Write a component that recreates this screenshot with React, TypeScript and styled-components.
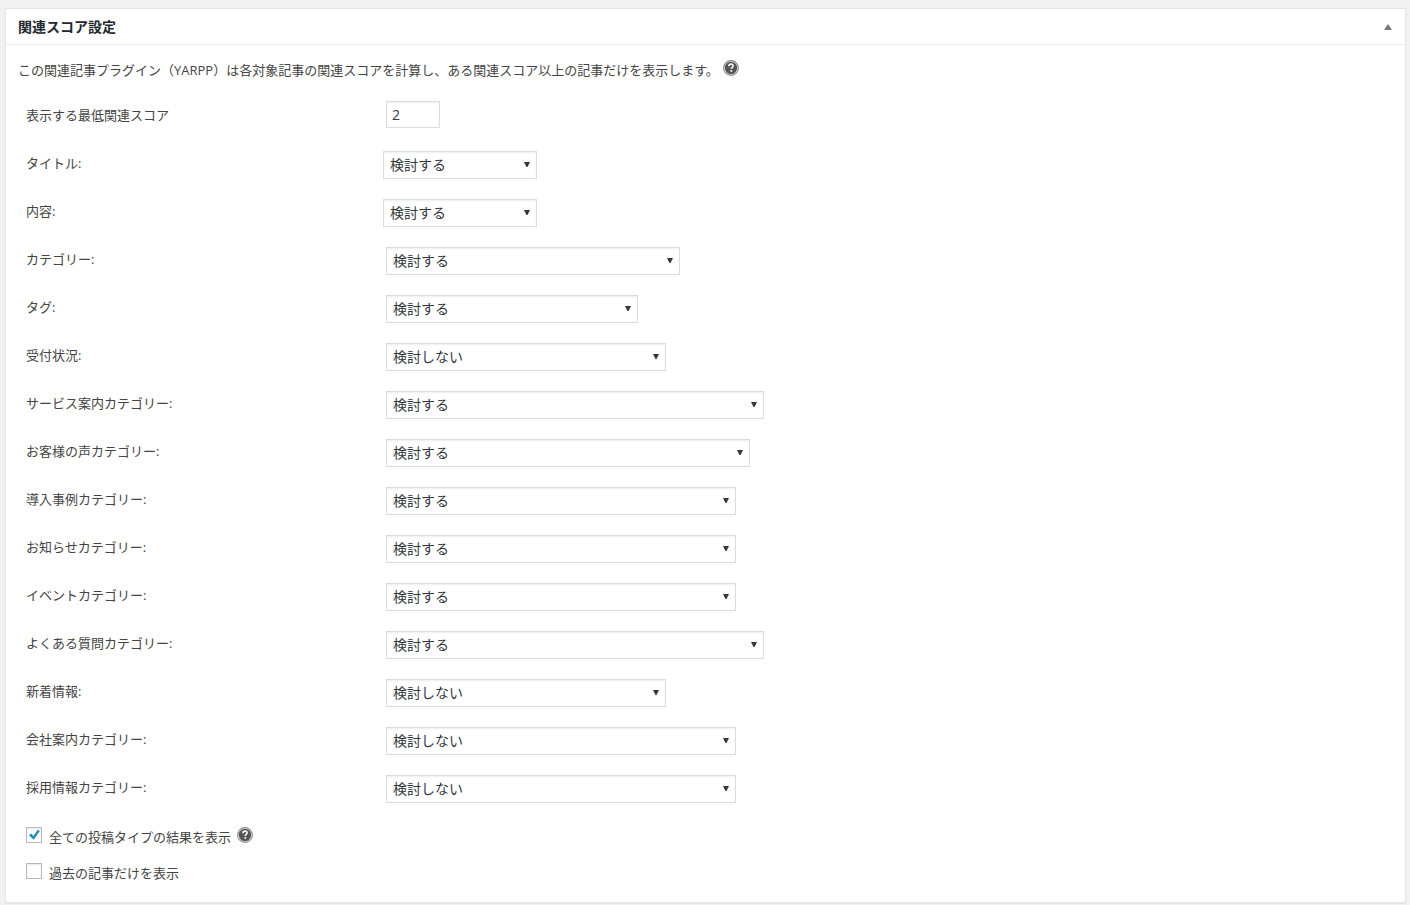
import React, { useState } from 'react';
import styled, { createGlobalStyle } from 'styled-components';

const GlobalStyle = createGlobalStyle`
  *, *::before, *::after { box-sizing: border-box; }
  body {
    margin: 0;
    background: #f1f1f1;
    color: #444;
    font-family: "Open Sans", "Noto Sans CJK JP", sans-serif;
    font-size: 13px;
  }
`;

const Page = styled.main`
  padding: 8px 4px 2px 5px;
`;

const Panel = styled.section`
  background: #fff;
  border: 1px solid #e5e5e5;
  box-shadow: 0 1px 1px rgba(0, 0, 0, 0.04);
`;

const PanelHeader = styled.header`
  display: flex;
  align-items: center;
  justify-content: space-between;
  height: 36px;
  padding: 0 12px;
  border-bottom: 1px solid #eee;
`;

const PanelTitle = styled.h2`
  margin: 0;
  color: #23282d;
  font-size: 14px;
  font-weight: 700;
  line-height: 20px;
`;

const ToggleButton = styled.button`
  display: flex;
  align-items: center;
  justify-content: center;
  width: 10px;
  height: 20px;
  padding: 0;
  border: 0;
  background: none;
  color: #72777c;
  cursor: pointer;
`;

const PanelBody = styled.form`
  padding: 15px 12px 11px;
`;

const Intro = styled.p`
  display: flex;
  align-items: flex-start;
  gap: 4px;
  margin: 0 0 11px;
  line-height: 20px;
`;

const Fields = styled.div`
  padding: 0 8px;
`;

const Row = styled.div`
  display: flex;
  align-items: flex-start;
  height: 48px;
  padding-top: 10px;
`;

const ScoreRow = styled(Row)`
  height: 50px;
`;

const Label = styled.label<{ $narrow?: boolean }>`
  flex: none;
  width: ${(p) => (p.$narrow ? 357 : 360)}px;
  line-height: 24px;
`;

const ScoreLabel = styled(Label)`
  line-height: 28px;
`;

const ScoreInput = styled.input`
  width: 54px;
  height: 27px;
  padding: 0 5px;
  border: 1px solid #ddd;
  background: #fff;
  box-shadow: inset 0 1px 2px rgba(0, 0, 0, 0.07);
  color: #32373c;
  font-family: inherit;
  font-size: 14px;
`;

const SelectWrap = styled.div<{ $width: number }>`
  position: relative;
  width: ${(p) => p.$width}px;
`;

const Select = styled.select`
  display: block;
  width: 100%;
  height: 28px;
  padding: 0 24px 2px 6px;
  appearance: none;
  border: 1px solid #ddd;
  border-radius: 0;
  background: #fff;
  box-shadow: inset 0 1px 2px rgba(0, 0, 0, 0.07);
  color: #32373c;
  font-family: inherit;
  font-size: 14px;
`;

const SelectArrow = styled.svg`
  position: absolute;
  top: 11px;
  right: 7px;
  pointer-events: none;
`;

const CheckRow = styled.div`
  display: flex;
  align-items: flex-start;
  gap: 6px;
  height: 36px;
  padding-top: 8px;
  line-height: 20px;
`;

const Checks = styled.div`
  padding: 6px 8px 0;
`;

const CheckLabel = styled.label`
  display: flex;
  align-items: flex-start;
  gap: 7px;
`;

const CheckWrap = styled.span`
  position: relative;
  width: 16px;
  height: 16px;
`;

const Checkbox = styled.input`
  display: block;
  width: 16px;
  height: 16px;
  margin: 0;
  appearance: none;
  border: 1px solid #b4b9be;
  background: #fff;
  box-shadow: inset 0 1px 2px rgba(0, 0, 0, 0.1);
`;

const CheckMark = styled.svg`
  position: absolute;
  top: 0;
  left: 0;
  pointer-events: none;
`;

const HelpButton = styled.button`
  display: block;
  flex: none;
  width: 16px;
  height: 16px;
  padding: 0;
  border: 0;
  background: none;
  cursor: help;
`;

const Help = () => (
  <HelpButton type="button" aria-label="ヘルプ">
    <svg width="16" height="16" viewBox="0 0 16 16" aria-hidden="true">
      <circle cx="8" cy="8" r="7.4" fill="#f4f4f4" stroke="#8a8a8a" strokeWidth="1.1" />
      <circle cx="8" cy="8" r="6.2" fill="#555" />
      <path
        d="M5.9 6.2c0-1.4.9-2 2.1-2s2.1.6 2.1 1.8c0 1.4-1.8 1.4-1.8 2.9"
        fill="none"
        stroke="#f0f0f0"
        strokeWidth="1.7"
      />
      <rect x="7.4" y="10" width="1.8" height="1.8" fill="#f0f0f0" />
    </svg>
  </HelpButton>
);

const OPTIONS = ['検討しない', '検討する'];

const FIELDS = [
  { id: 'title', label: 'タイトル:', value: '検討する', width: 154, narrow: true },
  { id: 'body', label: '内容:', value: '検討する', width: 154, narrow: true },
  { id: 'category', label: 'カテゴリー:', value: '検討する', width: 294 },
  { id: 'tag', label: 'タグ:', value: '検討する', width: 252 },
  { id: 'status', label: '受付状況:', value: '検討しない', width: 280 },
  { id: 'service', label: 'サービス案内カテゴリー:', value: '検討する', width: 378 },
  { id: 'voice', label: 'お客様の声カテゴリー:', value: '検討する', width: 364 },
  { id: 'case', label: '導入事例カテゴリー:', value: '検討する', width: 350 },
  { id: 'news', label: 'お知らせカテゴリー:', value: '検討する', width: 350 },
  { id: 'event', label: 'イベントカテゴリー:', value: '検討する', width: 350 },
  { id: 'faq', label: 'よくある質問カテゴリー:', value: '検討する', width: 378 },
  { id: 'whatsnew', label: '新着情報:', value: '検討しない', width: 280 },
  { id: 'company', label: '会社案内カテゴリー:', value: '検討しない', width: 350 },
  { id: 'recruit', label: '採用情報カテゴリー:', value: '検討しない', width: 350 },
];

interface CheckProps {
  label: string;
  initial: boolean;
}

const CheckField = ({ label, initial }: CheckProps) => {
  const [checked, setChecked] = useState(initial);
  return (
    <CheckLabel>
      <CheckWrap>
        <Checkbox
          type="checkbox"
          checked={checked}
          onChange={(e) => setChecked(e.target.checked)}
        />
        {checked && (
          <CheckMark width="16" height="16" viewBox="0 0 16 16" aria-hidden="true">
            <path d="M3 8.2 5.4 6.6l1.9 2.3L11.8 2.8l2 1.1L7.7 12.7z" fill="#1e8cbe" />
          </CheckMark>
        )}
      </CheckWrap>
      {label}
    </CheckLabel>
  );
};

export default function App() {
  return (
    <>
      <GlobalStyle />
      <Page>
        <Panel>
          <PanelHeader>
            <PanelTitle>関連スコア設定</PanelTitle>
            <ToggleButton type="button" aria-label="パネルを切り替え">
              <svg width="8" height="6" viewBox="0 0 8 6" aria-hidden="true">
                <path d="M4 0l4 6H0z" fill="currentColor" />
              </svg>
            </ToggleButton>
          </PanelHeader>
          <PanelBody>
            <Intro>
              この関連記事プラグイン（YARPP）は各対象記事の関連スコアを計算し、ある関連スコア以上の記事だけを表示します。
              <Help />
            </Intro>
            <Fields>
              <ScoreRow>
                <ScoreLabel htmlFor="threshold">表示する最低関連スコア</ScoreLabel>
                <ScoreInput id="threshold" type="text" defaultValue="2" />
              </ScoreRow>
              {FIELDS.map((field) => (
                <Row key={field.id}>
                  <Label htmlFor={field.id} $narrow={field.narrow}>
                    {field.label}
                  </Label>
                  <SelectWrap $width={field.width}>
                    <Select id={field.id} defaultValue={field.value}>
                      {OPTIONS.map((option) => (
                        <option key={option}>{option}</option>
                      ))}
                    </Select>
                    <SelectArrow width="6" height="5" viewBox="0 0 6 5" aria-hidden="true">
                      <path d="M0 0h6L3.5 5h-1z" fill="#32373c" />
                    </SelectArrow>
                  </SelectWrap>
                </Row>
              ))}
            </Fields>
            <Checks>
              <CheckRow>
                <CheckField label="全ての投稿タイプの結果を表示" initial />
                <Help />
              </CheckRow>
              <CheckRow>
                <CheckField label="過去の記事だけを表示" initial={false} />
              </CheckRow>
            </Checks>
          </PanelBody>
        </Panel>
      </Page>
    </>
  );
}
